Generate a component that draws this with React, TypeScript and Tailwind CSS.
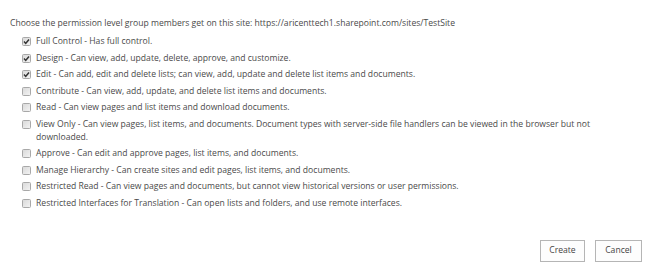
import React from "react";

const items: { label: string; checked: boolean }[] = [
  { label: "Full Control - Has full control.", checked: true },
  { label: "Design - Can view, add, update, delete, approve, and customize.", checked: true },
  { label: "Edit - Can add, edit and delete lists; can view, add, update and delete list items and documents.", checked: true },
  { label: "Contribute - Can view, add, update, and delete list items and documents.", checked: false },
  { label: "Read - Can view pages and list items and download documents.", checked: false },
  { label: "View Only - Can view pages, list items, and documents. Document types with server-side file handlers can be viewed in the browser but not downloaded.", checked: false },
  { label: "Approve - Can edit and approve pages, list items, and documents.", checked: false },
  { label: "Manage Hierarchy - Can create sites and edit pages, list items, and documents.", checked: false },
  { label: "Restricted Read - Can view pages and documents, but cannot view historical versions or user permissions.", checked: false },
  { label: "Restricted Interfaces for Translation - Can open lists and folders, and use remote interfaces.", checked: false },
];

function Box({ checked }: { checked: boolean }) {
  return (
    <svg width="9" height="9" viewBox="0 0 9 9" className="shrink-0 mt-[2px]">
      <defs>
        <linearGradient id="g" x1="0" y1="0" x2="1" y2="1">
          <stop offset="0" stopColor="#d8d8d8" />
          <stop offset="1" stopColor="#f4f4f4" />
        </linearGradient>
      </defs>
      <rect x="0.5" y="0.5" width="8" height="8" rx="1" fill="url(#g)" stroke="#a8a8a8" />
      {checked && (
        <path d="M2 4.6 L3.7 6.4 L7 2.4" fill="none" stroke="#333" strokeWidth="1.5" />
      )}
    </svg>
  );
}

export default function App() {
  return (
    <div
      className="w-[650px] h-[267px] bg-white text-[#4a4a4a] flex flex-col"
      style={{ fontFamily: '"Open Sans", "Noto Sans", sans-serif' }}
    >
      <div className="pt-[17px] pl-[10px] text-[8.6px] leading-[13px]">
        Choose the permission level group members get on this site: https://aricenttech1.sharepoint.com/sites/TestSite
      </div>
      <div className="mt-[5px] pl-[22px] flex flex-col gap-[3.5px] text-[8.6px] leading-[13px] w-[600px]">
        {items.map((it) => (
          <div key={it.label} className="flex gap-[5px] items-start">
            <Box checked={it.checked} />
            <span>{it.label}</span>
          </div>
        ))}
      </div>
      <div className="flex justify-end gap-[10px] pr-[8px] mt-[30px]">
        <button className="w-[45px] h-[22px] border border-[#b5b5b5] bg-[#fdfdfd] text-[8.6px] text-[#444]">
          Create
        </button>
        <button className="w-[47px] h-[22px] border border-[#b5b5b5] bg-[#fdfdfd] text-[8.6px] text-[#444]">
          Cancel
        </button>
      </div>
    </div>
  );
}
